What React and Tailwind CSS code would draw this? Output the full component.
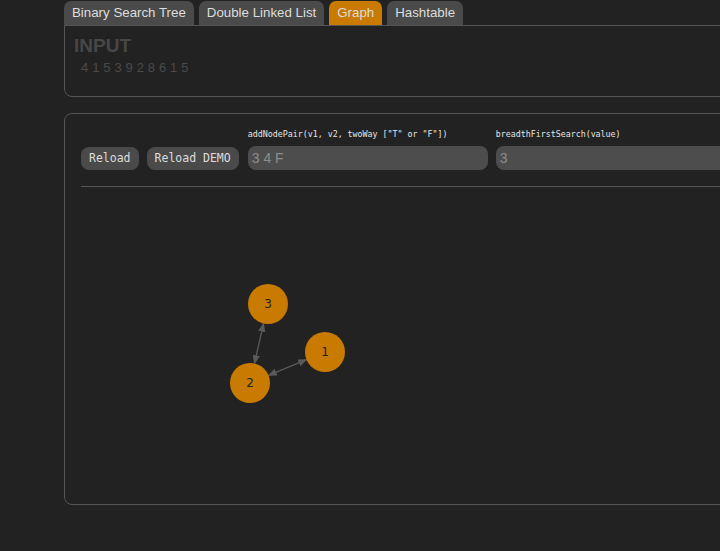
import React, { useState } from 'react';

const tabs = ['Binary Search Tree', 'Double Linked List', 'Graph', 'Hashtable'];

const nodes = [
    { id: 3, x: 203, y: 117 },
    { id: 1, x: 260, y: 165 },
    { id: 2, x: 185, y: 196 },
];

const edges = [
    [3, 2],
    [2, 1],
];

const mono = { fontFamily: '"DejaVu Sans Mono", "Liberation Mono", monospace' };

const App = () => {
    const [active, setActive] = useState('Graph');
    const [pair, setPair] = useState('');
    const [search, setSearch] = useState('');

    const byId = (id) => nodes.find((n) => n.id === id);

    return (
        <div className="w-[720px] min-h-[551px] overflow-hidden bg-[#222222] font-['Liberation_Sans',Arial,sans-serif]">
            <div className="flex gap-[5px] pl-[64px] pt-[1px]">
                {tabs.map((tab) => (
                    <button
                        key={tab}
                        onClick={() => setActive(tab)}
                        className={`h-[24px] px-2 rounded-t-[7px] text-[13.3px] leading-[24px] text-[#dddddd] whitespace-nowrap ${
                            active === tab ? 'bg-[#c97a00]' : 'bg-[#4a4a4a]'
                        }`}
                    >
                        {tab}
                    </button>
                ))}
            </div>

            {/* input panel */}
            <div className="ml-[64px] w-[800px] h-[72px] border border-[#555555] rounded-bl-[8px] pl-[9px] pt-[9px]">
                <div className="text-[19px] leading-[22px] font-bold text-[#474747]">INPUT</div>
                <div className="mt-[3px] pl-[7px] text-[13px] leading-[15px] tracking-[3.9px] text-[#4a4a4a]">4153928615</div>
            </div>

            {/* graph panel */}
            <div className="ml-[64px] mt-[16px] w-[800px] h-[392px] border border-[#555555] rounded-[8px]">
                <div className="flex items-end gap-2 pl-4 pt-[15px]">
                    <button style={mono} className="h-[23px] px-2 rounded-[8px] bg-[#4a4a4a] text-[11.5px] text-[#dddddd]">
                        Reload
                    </button>
                    <button style={mono} className="h-[23px] px-2 rounded-[8px] bg-[#4a4a4a] text-[11.5px] text-[#dddddd]">
                        Reload DEMO
                    </button>
                    <div className="flex flex-col w-[240px] ml-[1px]">
                        <label style={mono} className="text-[8.3px] leading-[10px] text-[#e6e6e6] mb-[7px] whitespace-nowrap">
                            addNodePair(v1, v2, twoWay ["T" or "F"])
                        </label>
                        <input
                            value={pair}
                            onChange={(e) => setPair(e.target.value)}
                            placeholder="3 4 F"
                            className="h-[24px] rounded-[8px] bg-[#4d4d4d] px-1 text-[14px] text-[#dddddd] placeholder:text-[#8c8c8c] outline-none"
                        />
                    </div>
                    <div className="flex flex-col w-[300px]">
                        <label style={mono} className="text-[8.3px] leading-[10px] text-[#e6e6e6] mb-[7px] whitespace-nowrap">
                            breadthFirstSearch(value)
                        </label>
                        <input
                            value={search}
                            onChange={(e) => setSearch(e.target.value)}
                            placeholder="3"
                            className="h-[24px] rounded-[8px] bg-[#4d4d4d] px-1 text-[14px] text-[#dddddd] placeholder:text-[#8c8c8c] outline-none"
                        />
                    </div>
                </div>

                <div className="mx-4 mt-[16px] border-t border-[#555555]"></div>

                <svg width="656" height="300" className="block">
                    <defs>
                        <marker id="arrow" viewBox="0 0 10 10" refX="9" refY="5" markerWidth="7" markerHeight="7" orient="auto-start-reverse">
                            <path d="M0 1 L10 5 L0 9 z" fill="#5a5a5a" />
                        </marker>
                    </defs>
                    {edges.map(([a, b]) => {
                        const p = byId(a);
                        const q = byId(b);
                        const dx = q.x - p.x;
                        const dy = q.y - p.y;
                        const len = Math.sqrt(dx * dx + dy * dy);
                        const ux = dx / len;
                        const uy = dy / len;
                        return (
                            <line
                                key={`${a}-${b}`}
                                x1={p.x + ux * 20}
                                y1={p.y + uy * 20}
                                x2={q.x - ux * 20}
                                y2={q.y - uy * 20}
                                stroke="#5a5a5a"
                                strokeWidth="1.3"
                                markerStart="url(#arrow)"
                                markerEnd="url(#arrow)"
                            />
                        );
                    })}
                    {nodes.map((n) => (
                        <g key={n.id}>
                            <circle cx={n.x} cy={n.y} r="20" fill="#c97a00" />
                            <text
                                x={n.x}
                                y={n.y + 4}
                                textAnchor="middle"
                                fontSize="12"
                                fill="#222222"
                                fontFamily='"DejaVu Sans", sans-serif'
                            >
                                {n.id}
                            </text>
                        </g>
                    ))}
                </svg>
            </div>
        </div>
    );
};

export default App;
